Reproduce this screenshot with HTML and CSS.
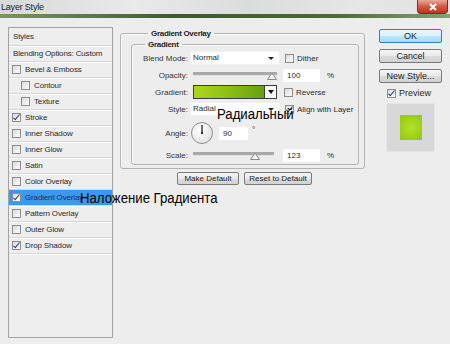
FILE: index.html
```html
<!DOCTYPE html>
<html lang="en">
  <head>
    <meta charset="UTF-8" />
    <title>Layer Style</title>
    <link rel="stylesheet" href="styles.css">
  </head>
  <body>
    <div class="window">
      <div class="titlebar">
        <span class="title">Layer Style</span>
        <div class="close">
          <svg width="10" height="8" viewBox="0 0 10 8"><path d="M2 1 L8 7 M8 1 L2 7" stroke="#fff" stroke-width="2"/></svg>
        </div>
      </div>

      <div class="main">
        <div class="styles-list">
          <div class="list-head">Styles</div>
          <div class="list-head blend">Blending Options: Custom</div>
          <div class="item"><span class="check"></span>Bevel &amp; Emboss</div>
          <div class="item sub"><span class="check"></span>Contour</div>
          <div class="item sub"><span class="check"></span>Texture</div>
          <div class="item"><span class="check on"></span>Stroke</div>
          <div class="item"><span class="check"></span>Inner Shadow</div>
          <div class="item"><span class="check"></span>Inner Glow</div>
          <div class="item"><span class="check"></span>Satin</div>
          <div class="item"><span class="check"></span>Color Overlay</div>
          <div class="item selected"><span class="check on"></span>Gradient Overlay</div>
          <div class="item"><span class="check"></span>Pattern Overlay</div>
          <div class="item"><span class="check"></span>Outer Glow</div>
          <div class="item"><span class="check on"></span>Drop Shadow</div>
        </div>

        <div class="content">
          <fieldset class="group outer">
            <legend>Gradient Overlay</legend>
            <fieldset class="group inner">
              <legend>Gradient</legend>

              <div class="row">
                <label>Blend Mode:</label>
                <div class="select">Normal<span class="arrow"></span></div>
                <span class="check"></span><span class="opt">Dither</span>
              </div>

              <div class="row">
                <label>Opacity:</label>
                <div class="slider">
                  <svg width="85" height="12" viewBox="0 0 85 12">
                    <rect x="0" y="3" width="84" height="3" fill="#a9a9a9"/>
                    <rect x="0" y="6" width="84" height="1" fill="#e2e2e2"/>
                    <polygon points="79,4 83.5,10.5 74.5,10.5" fill="#f4f4f4" stroke="#8c8c8c"/>
                  </svg>
                </div>
                <div class="field wide">100</div><span class="unit">%</span>
              </div>

              <div class="row">
                <label>Gradient:</label>
                <div class="swatch"></div>
                <div class="swatch-btn"><span class="tri"></span></div>
                <span class="check"></span><span class="opt">Reverse</span>
              </div>

              <div class="row">
                <label>Style:</label>
                <div class="select">Radial<span class="arrow"></span></div>
                <span class="check on"></span><span class="opt">Align with Layer</span>
              </div>

              <div class="row angle-row">
                <label>Angle:</label>
                <div class="dial">
                  <svg width="22" height="22" viewBox="0 0 22 22"><path d="M11 11 V3" stroke="#333" stroke-width="1.4"/><circle cx="11" cy="11" r="1.2" fill="#333"/></svg>
                </div>
                <div class="field narrow">90</div><span class="deg">°</span>
              </div>

              <div class="row scale-row">
                <label>Scale:</label>
                <div class="slider">
                  <svg width="85" height="12" viewBox="0 0 85 12">
                    <rect x="0" y="3" width="81" height="3" fill="#a9a9a9"/>
                    <rect x="0" y="6" width="81" height="1" fill="#e2e2e2"/>
                    <polygon points="62,4 66.5,10.5 57.5,10.5" fill="#f4f4f4" stroke="#8c8c8c"/>
                  </svg>
                </div>
                <div class="field wide">123</div><span class="unit">%</span>
              </div>
            </fieldset>
          </fieldset>

          <div class="defaults">
            <button class="btn make">Make Default</button>
            <button class="btn reset">Reset to Default</button>
          </div>
        </div>

        <div class="actions">
          <button class="btn big ok">OK</button>
          <button class="btn big">Cancel</button>
          <button class="btn big">New Style...</button>
          <div class="preview-opt"><span class="check on"></span>Preview</div>
          <div class="preview"><div class="preview-fill"></div></div>
        </div>
      </div>

      <div class="note note-gradient">Наложение Градиента</div>
      <div class="note note-radial">Радиальный</div>
    </div>
  </body>
</html>
```

FILE: styles.css
```css
body {
  margin: 0;
  font-family: "Liberation Sans", Arial, sans-serif;
  font-size: 8px;
  color: #2a2a2a;
  background: #ededed;
}
.window {
  position: relative;
  width: 450px;
  height: 344px;
  overflow: hidden;
  background: #ededed;
}
.titlebar {
  display: flex;
  align-items: center;
  justify-content: space-between;
  height: 14px;
  padding-left: 1px;
  background: linear-gradient(to right, #d6dad9, #e9ebea 30%, #d9dddc 55%, #e6e8e7 80%, #dfe2e1);
  border-bottom: 4px solid #56703e;
  border-image: linear-gradient(to right, #7d9466, #3f5a2a 40%, #4f6a38 75%, #8aa073) 1;
}
.title {
  font-size: 9px;
  color: #1c1c1c;
  letter-spacing: -0.2px;
}
.close {
  display: flex;
  align-items: center;
  justify-content: center;
  align-self: flex-start;
  width: 29px;
  height: 13px;
  margin-right: 2px;
  border: 1px solid #7a2d20;
  border-top: none;
  border-radius: 0 0 4px 4px;
  background: linear-gradient(#eaa899, #d35a40 50%, #b9341f);
}
.main {
  display: flex;
  padding: 9px 8px 0 8px;
}

/* left list */
.styles-list {
  width: 103px;
  height: 309px;
  border: 1px solid #a3a3a3;
  background: #eeeeee;
}
.list-head {
  height: 17px;
  line-height: 17px;
  padding-left: 4px;
  border-bottom: 1px solid #d6d6d6;
  box-shadow: 0 1px 0 #fdfdfd;
  letter-spacing: -0.15px;
}
.list-head.blend {
  height: 15px;
  line-height: 15px;
}
.item {
  display: flex;
  align-items: center;
  height: 15px;
  padding-left: 3px;
  border-bottom: 1px solid #d6d6d6;
  box-shadow: 0 1px 0 #fdfdfd;
  letter-spacing: -0.15px;
}
.item.sub {
  padding-left: 12px;
}
.item .check {
  margin-right: 4px;
}
.item.selected {
  background: #3d98ec;
  color: #1d3058;
}
.check {
  position: relative;
  display: inline-block;
  flex: none;
  width: 7px;
  height: 7px;
  border: 1px solid #8d8d8d;
  background: linear-gradient(135deg, #d9d9d9, #ffffff);
}
.check.on::after {
  content: "";
  position: absolute;
  left: 2px;
  top: -1px;
  width: 2px;
  height: 6px;
  border: solid #2c3d6b;
  border-width: 0 1.5px 1.5px 0;
  transform: rotate(40deg);
}

/* middle */
.content {
  width: 245px;
  margin-left: 7px;
}
.group {
  margin: 0;
  border: 1px solid #b4b4b4;
  border-radius: 3px;
  box-shadow: inset 1px 1px 0 #fbfbfb;
}
.group legend {
  padding: 0 3px;
  height: 11px;
  line-height: 11px;
  font-weight: bold;
  letter-spacing: -0.3px;
  color: #222;
}
.outer {
  margin-top: 1px;
  padding: 0 5px 3px 10px;
}
.outer > legend {
  margin-left: 17px;
}
.inner {
  padding: 0 0 1px 0;
}
.inner > legend {
  margin-left: 13px;
}
.row {
  display: flex;
  align-items: center;
  height: 16px;
  margin-bottom: 1px;
}
.row label {
  width: 56px;
  margin-right: 2px;
  text-align: right;
  color: #333;
}
.select {
  position: relative;
  width: 87px;
  height: 14px;
  line-height: 14px;
  padding-left: 3px;
  margin-right: 5px;
  background: #fff;
  box-shadow: inset 0 0 0 1px #f0f0f0;
}
.arrow {
  position: absolute;
  right: 6px;
  top: 6px;
  border-left: 3px solid transparent;
  border-right: 3px solid transparent;
  border-top: 3px solid #222;
}
.opt {
  margin-left: 3px;
}
.slider {
  display: flex;
  width: 85px;
  margin-left: 3px;
}
.field {
  height: 13px;
  line-height: 13px;
  padding-left: 4px;
  background: #fff;
}
.wide {
  width: 33px;
  margin-left: 5px;
}
.narrow {
  width: 25px;
  margin-left: 6px;
}
.unit {
  margin-left: 7px;
}
.deg {
  margin-left: 4px;
  align-self: flex-start;
  margin-top: 3px;
}
.swatch {
  width: 70px;
  height: 12px;
  margin-left: 3px;
  border: 1px solid #3c3c3c;
  background: linear-gradient(to right, #aed61e, #8cbf14 50%, #66a011);
}
.swatch-btn {
  display: flex;
  align-items: center;
  justify-content: center;
  width: 11px;
  height: 12px;
  margin-right: 7px;
  border: 1px solid #3c3c3c;
  border-left: none;
  background: #fafafa;
}
.tri {
  border-left: 3.5px solid transparent;
  border-right: 3.5px solid transparent;
  border-top: 4px solid #111;
}
.angle-row {
  height: 22px;
  margin-top: 5px;
  margin-bottom: 3px;
}
.dial {
  display: flex;
  width: 20px;
  height: 20px;
  margin-left: 1px;
  border: 1px solid #8f8f8f;
  border-radius: 50%;
  background: radial-gradient(circle at 40% 35%, #ffffff, #e6e6e6 70%, #d2d2d2);
}
.dial svg {
  margin: -1px;
}
.scale-row {
  margin-bottom: 0;
}
.defaults {
  display: flex;
  justify-content: center;
  gap: 5px;
  margin-top: 3px;
  padding-left: 4px;
}
.btn {
  height: 13px;
  padding: 0;
  font-family: "Liberation Sans", Arial, sans-serif;
  font-size: 8px;
  color: #222;
  border: 1px solid #7a7a7a;
  border-radius: 2px;
  background: linear-gradient(#f6f6f6, #e9e9e9 50%, #dcdcdc 51%, #d2d2d2);
}
.make {
  width: 62px;
}
.reset {
  width: 68px;
}

/* right */
.actions {
  display: flex;
  flex-direction: column;
  align-items: center;
  width: 63px;
  margin-left: 14px;
  padding-top: 2px;
}
.btn.big {
  width: 63px;
  height: 14px;
  margin-bottom: 6px;
  font-size: 9px;
}
.btn.ok {
  border-color: #3a7fb5;
  background: linear-gradient(#eaf6fd, #d9f0fc 50%, #bee6fd 51%, #a7d9f5);
}
.preview-opt {
  display: flex;
  align-items: center;
  align-self: flex-start;
  margin: -1px 0 0 8px;
  font-size: 9px;
}
.preview-opt .check {
  margin-right: 3px;
}
.preview {
  display: flex;
  align-items: center;
  justify-content: center;
  align-self: flex-start;
  width: 47px;
  height: 47px;
  margin: 5px 0 0 7px;
  border: 1px solid #e6e6e6;
  background: #d8d8d8;
}
.preview-fill {
  width: 22px;
  height: 25px;
  background: radial-gradient(circle, #b2e22a, #98cc12 80%);
}

/* overlay captions */
.note {
  position: absolute;
  font-family: "Liberation Sans", Arial, sans-serif;
  font-size: 15.5px;
  line-height: 1;
  color: #000;
  transform: scaleX(0.85);
  transform-origin: left top;
  white-space: nowrap;
}
.note-gradient {
  left: 80px;
  top: 190px;
}
.note-radial {
  left: 217px;
  top: 106px;
}
```
